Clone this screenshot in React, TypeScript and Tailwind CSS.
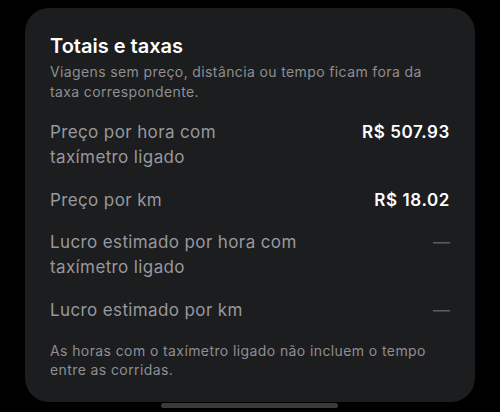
const rows = [
  { label: ["Preço por hora com", "taxímetro ligado"], value: "R$ 507.93" },
  { label: ["Preço por km"], value: "R$ 18.02" },
  { label: ["Lucro estimado por hora com", "taxímetro ligado"], value: null },
  { label: ["Lucro estimado por km"], value: null },
]

export default function App() {
  return (
    <div className="relative h-[412px] w-[500px] overflow-hidden bg-black font-['Inter','Noto_Sans',sans-serif]">
      <div className="mx-[25px] mt-2 flex h-[394px] w-[450px] flex-col rounded-[24px] bg-[#1c1d1e] px-[25px] pt-[26px]">
        <h2 className="text-[20px] leading-[24px] font-semibold text-white">Totais e taxas</h2>
        <p className="mt-1 text-[14px] leading-[20px] tracking-[0.38px] text-[#8e8e93]">
          Viagens sem preço, distância ou tempo ficam fora da
          <br />
          taxa correspondente.
        </p>

        <div className="mt-[18px] flex flex-col gap-[17.5px]">
          {rows.map((row) => (
            <div key={row.label.join(" ")} className="flex items-start justify-between">
              <span className="text-[17px] leading-[25px] tracking-[0.38px] text-[#98989d]">
                {row.label.map((line, i) => (
                  <span key={line}>
                    {i > 0 && <br />}
                    {line}
                  </span>
                ))}
              </span>
              {row.value ? (
                <span className="text-[17px] leading-[25px] font-semibold tracking-[0.6px] text-white">
                  {row.value}
                </span>
              ) : (
                <span className="text-[17px] leading-[25px] text-[#5c5c60]">—</span>
              )}
            </div>
          ))}
        </div>

        <p className="mt-[18px] text-[14px] leading-[19.5px] tracking-[0.4px] text-[#8e8e93]">
          As horas com o taxímetro ligado não incluem o tempo
          <br />
          entre as corridas.
        </p>
      </div>

      <div className="absolute top-[403px] left-[161px] h-[5px] w-[177px] rounded-full bg-[#3a3a3c]" />
    </div>
  )
}
